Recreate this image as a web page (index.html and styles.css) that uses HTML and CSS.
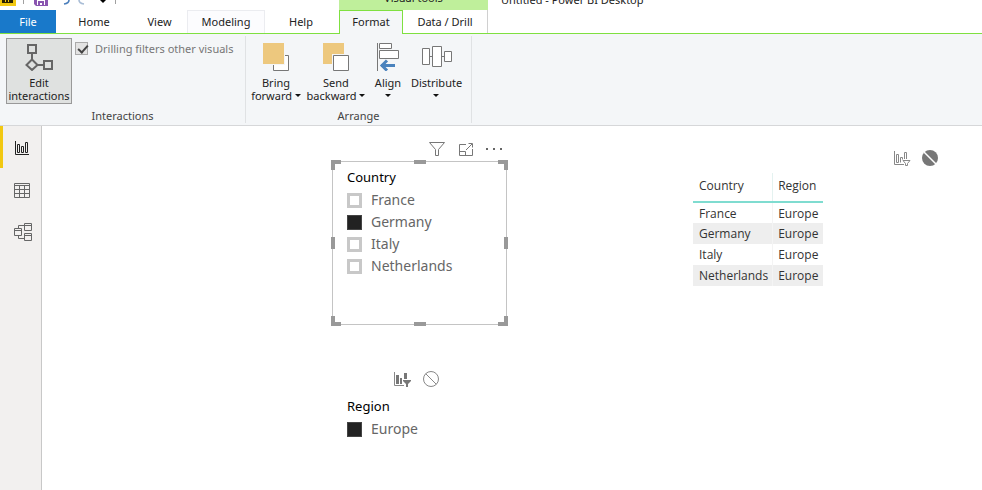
FILE: index.html
```html
<!DOCTYPE html>
<html lang="en">
<head>
<meta charset="utf-8">
<title>Untitled - Power BI Desktop</title>
<link rel="stylesheet" href="styles.css">
</head>
<body>
<header class="titlebar">
  <div class="quick">
    <svg width="120" height="10" viewBox="0 0 120 10" aria-hidden="true">
      <path fill="#f2c811" d="M0 0h16v6H0z"/>
      <path fill="#2b2200" d="M2 0h11v3H2z"/>
      <path stroke="#f2c811" d="M5.500 0v2M8.500 0v2"/>
      <path stroke="#a0a0a0" d="M23.500 0v4M115.500 0v4"/>
      <path fill="#8a55b0" d="M34 0h14v6H36l-2-2z"/>
      <path fill="#fff" d="M37 0h8v5h-8z"/>
      <path fill="#8a55b0" d="M38 1h6v4h-2V3h-2v2h-2z"/>
      <path fill="none" stroke="#4a7ebb" stroke-width="1.600" d="M69 0c0 2-1.500 3.500-5 4"/>
      <path fill="none" stroke="#a9bdd6" stroke-width="1.600" d="M79 0c0 2 1.500 3.500 5 4"/>
      <path d="M100 0h6l-3 3z"/>
    </svg>
  </div>
  <div class="context">Visual tools</div>
  <div class="doc">Untitled - Power BI Desktop</div>
</header>
<nav class="tabs">
  <button class="tab file">File</button>
  <button class="tab">Home</button>
  <button class="tab">View</button>
  <button class="tab hover">Modeling</button>
  <button class="tab">Help</button>
  <button class="tab active">Format</button>
  <button class="tab last">Data / Drill</button>
</nav>
<section class="ribbon">
  <div class="group interactions">
    <div class="tools">
      <button class="tool pressed">
        <svg width="30" height="28" viewBox="-1 -1 30 28" fill="none" stroke="#666" stroke-width="2" aria-hidden="true">
          <path d="M3 1h8v8H3zM7 9v6M7 15.500l5.500 5.500L7 26 1.500 21zM12 21h6M19 17h8v8h-8z"/>
        </svg>
        <span>Edit<br>interactions</span>
      </button>
      <label class="check"><input type="checkbox" checked>Drilling filters other visuals</label>
    </div>
    <div class="caption">Interactions</div>
  </div>
  <div class="group arrange">
    <div class="tools">
      <button class="tool">
        <svg width="26" height="28" viewBox="0 0 26 28" aria-hidden="true"><path fill="#fff" stroke="#777" d="M10.500 12.500h15v15h-15z"/><path fill="#f4f6f8" d="M0 0h22v22H0z"/><path fill="#edc87e" d="M0 0h21v21H0z"/></svg>
        <span>Bring<br>forward <i class="caret"></i></span>
      </button>
      <button class="tool">
        <svg width="26" height="28" viewBox="0 0 26 28" aria-hidden="true"><path fill="#edc87e" d="M0 0h21v21H0z"/><path fill="#f4f6f8" d="M9 11h17v17H9z"/><path fill="#fff" stroke="#777" d="M10.500 12.500h15v15h-15z"/></svg>
        <span>Send<br>backward <i class="caret"></i></span>
      </button>
      <button class="tool">
        <svg width="22" height="28" viewBox="0 0 22 28" aria-hidden="true"><path fill="#fff" stroke="#777" d="M.5 0v28M2.500.5h12v5h-12zM2.500 7.500h19v8h-19z"/><path fill="none" stroke="#4a82bd" stroke-width="3" d="M18 22.500H4M10 17.500l-5 5 5 5"/></svg>
        <span>Align<br><i class="caret"></i></span>
      </button>
      <button class="tool">
        <svg width="30" height="28" viewBox="0 0 30 28" aria-hidden="true"><path fill="#fff" stroke="#777" d="M.5 5.500h7v16h-7zM10.500 3.500h9v20h-9zM22.500 8.500h7v10h-7zM8 13.500h2M20 13.500h2"/></svg>
        <span>Distribute<br><i class="caret"></i></span>
      </button>
    </div>
    <div class="caption">Arrange</div>
  </div>
</section>
<main class="work">
  <nav class="views">
    <button class="view current" aria-label="Report"><svg width="20" height="20" viewBox="0 0 20 20" fill="none" stroke="#222" aria-hidden="true"><path d="M3.500 3v13.500H17M5.500 6.500h2v8h-2zM9.500 8.500h2v6h-2zM13.500 4.500h2v10h-2z"/></svg></button>
    <button class="view" aria-label="Data"><svg width="20" height="20" viewBox="0 0 20 20" fill="none" stroke="#666" aria-hidden="true"><path d="M2.500 3.500h15v14h-15zM2 5.500h16M2 9.500h16M2 13.500h16M7.500 6v12M12.500 6v12"/></svg></button>
    <button class="view" aria-label="Model"><svg width="20" height="20" viewBox="0 0 20 20" fill="none" stroke="#666" aria-hidden="true"><path d="M2.500 6.500h7v7h-7zM2 8.500h8M12.500 1.500h7v7h-7zM12 3.500h8M12.500 11.500h7v7h-7zM12 13.500h8M6.500 6V3.500H12M6.500 14v2.500H12"/></svg></button>
  </nav>
  <div class="canvas">
    <div class="column">
      <div class="actions top">
        <svg width="18" height="16" viewBox="0 0 18 16" fill="none" stroke="#777" aria-hidden="true"><path d="M1.500 1.500h15l-6 7v6h-3v-6z"/></svg>
        <svg width="16" height="16" viewBox="0 0 16 16" fill="none" stroke="#777" aria-hidden="true"><path d="M8 3.500H1.500v11h13V8M1.500 10.500h6v4M8 9l6-6M10.500 2.500h4v4"/></svg>
        <svg width="16" height="16" viewBox="0 0 16 16" fill="#666" aria-hidden="true"><path d="M0 7h2v2H0zM7 7h2v2H7zM14 7h2v2h-2z"/></svg>
      </div>
      <section class="slicer selected">
        <i class="handle nw"></i><i class="handle n"></i><i class="handle ne"></i><i class="handle w"></i><i class="handle e"></i><i class="handle sw"></i><i class="handle s"></i><i class="handle se"></i>
        <h2>Country</h2>
        <label><input type="checkbox">France</label>
        <label><input type="checkbox" checked>Germany</label>
        <label><input type="checkbox">Italy</label>
        <label><input type="checkbox">Netherlands</label>
      </section>
      <div class="actions mid">
        <svg width="18" height="18" viewBox="0 0 18 18" aria-hidden="true"><path fill="none" stroke="#888" d="M1.500 2v13.500H11"/><path fill="#777" d="M3 5h3v9H3zM7 8h2v6H7zM11 3h3v6h-3zM10 10h8v1l-3 3v3h-2v-3l-3-3z"/></svg>
        <svg width="18" height="18" viewBox="0 0 18 18" fill="none" stroke="#888" aria-hidden="true"><circle cx="9" cy="9" r="7.500"/><path d="M3.700 3.700l10.600 10.600"/></svg>
      </div>
      <section class="slicer">
        <h2>Region</h2>
        <label><input type="checkbox" checked>Europe</label>
      </section>
    </div>
    <div class="tablevis">
      <div class="actions side">
        <svg width="18" height="18" viewBox="0 0 18 18" fill="none" stroke="#888" aria-hidden="true"><path d="M1.500 2v13.500H11M3.500 5.500h2v8h-2zM7.500 13.500v-5h2v2M11.500 10V3.500h2V10M10 11.500h7l-2.500 3v2h-2v-2z"/></svg>
        <svg width="18" height="18" viewBox="0 0 18 18" aria-hidden="true"><circle cx="9" cy="9" r="8" fill="#777"/><path stroke="#fff" stroke-width="1.500" d="M3 3l12 12"/></svg>
      </div>
      <table>
        <thead><tr><th>Country</th><th>Region</th></tr></thead>
        <tbody>
          <tr><td>France</td><td>Europe</td></tr>
          <tr><td>Germany</td><td>Europe</td></tr>
          <tr><td>Italy</td><td>Europe</td></tr>
          <tr><td>Netherlands</td><td>Europe</td></tr>
        </tbody>
      </table>
    </div>
  </div>
</main>
</body>
</html>
```
FILE: styles.css
```css
* { box-sizing: border-box; }
body {
  margin: 0;
  min-height: 100vh;
  display: flex;
  flex-direction: column;
  background: #fff;
  color: #222;
  font: 11px/13px "Noto Sans", "Open Sans", sans-serif;
}
button { margin: 0; padding: 0; border: 0; background: none; color: inherit; font: inherit; }
svg { display: block; flex: none; }
input { appearance: none; margin: 0; flex: none; }

.titlebar { display: flex; align-items: flex-end; height: 10px; overflow: hidden; }
.quick { width: 339px; }
.context { width: 149px; padding-bottom: 6px; background: #bfef9b; text-align: center; }
.doc { padding: 0 0 4px 13px; }

.tabs { display: flex; height: 24px; border-bottom: 1px solid #7fe040; }
.tab { width: 76px; height: 23px; }
.tab.file { width: 56px; background: #1979ca; color: #fff; }
.tab:nth-child(3) { width: 55px; }
.tab.hover { width: 78px; border: 1px solid #ebecf0; border-width: 1px 1px 0; padding-bottom: 1px; background: #fcfcfe; }
.tab:nth-child(5) { width: 72px; }
.tab.active { width: 64px; height: 24px; margin-left: 2px; border: 1px solid #7fe040; border-bottom: 0; padding-bottom: 2px; background: #f4f6f8; }
.tab.last { width: 85px; border-right: 1px solid #d0d0d0; }

.ribbon { display: flex; padding: 2px 0; border-bottom: 1px solid #d6d7d9; background: #f4f6f8; }
.group { display: flex; flex-direction: column; height: 87px; border-right: 1px solid #e0e2e4; }
.interactions { width: 246px; padding-left: 6px; }
.arrange { width: 226px; }
.tools { display: flex; flex: 1; padding-top: 2px; }
.caption { line-height: 14px; text-align: center; color: #444; }
.interactions .caption { margin-right: 6px; }
.tool { display: flex; flex-direction: column; align-items: center; gap: 5px; height: 66px; padding-top: 5px; white-space: nowrap; }
.arrange .tool { width: 60px; }
.arrange .tool:nth-child(3) { width: 44px; }
.arrange .tool:nth-child(4) { width: 53px; }
.tool.pressed { width: 66px; padding-top: 4px; border: 1px solid #999; background: #dfe1e0; }
.caret { display: inline-block; border: 3px solid transparent; border-top-color: #111; border-bottom: 0; vertical-align: 3px; }
.check { display: flex; gap: 7px; height: 20px; padding-left: 3px; align-items: center; color: #777; white-space: nowrap; }
.check input { position: relative; width: 13px; height: 13px; border: 1px solid #aaa; background: #e3e3e3; }
.check input::after { content: ""; position: absolute; left: 4px; top: 0; width: 4px; height: 8px; border: solid #444; border-width: 0 2px 2px 0; transform: rotate(42deg); }

.work { display: flex; flex: 1; }
.views { display: flex; flex-direction: column; width: 42px; border-right: 1px solid #c8c8c8; background: #f2f0ef; }
.view { display: flex; align-items: center; justify-content: center; height: 42px; padding: 2px 0 0 2px; }
.view.current { padding-left: 0; border-left: 3px solid #f2c811; }

.canvas { display: flex; flex: 1; gap: 186px; padding-left: 290px; }
.column { width: 175px; }
.actions { display: flex; justify-content: flex-end; }
.top { gap: 12px; padding: 15px 5px 4px 0; }
.mid { gap: 11px; padding: 45px 67px 2px 0; }
.side { gap: 10px; padding: 23px 0 6px; }
.slicer { position: relative; padding: 7px 0 0 14px; border: 1px solid transparent; }
.slicer.selected { height: 164px; border-color: #c4c4c4; }
.slicer h2 { margin: 0 0 4px; font-size: 13px; line-height: 16px; font-weight: 400; color: #000; }
.slicer label { display: flex; align-items: center; gap: 9px; height: 22px; font-size: 14px; line-height: 20px; color: #666; }
.slicer input { width: 15px; height: 15px; border: 3px solid #c8c8c8; background: #fff; }
.slicer input:checked { border: 1px solid #444; background: #222; }

.handle { position: absolute; width: 12px; height: 4px; background: #999; }
.n, .s { left: calc(50% - 6px); }
.n { top: -2px; }
.s { bottom: -2px; }
.w, .e { top: calc(50% - 6px); width: 4px; height: 12px; }
.w { left: -2px; }
.e { right: -2px; }
.nw, .ne, .sw, .se { width: 10px; height: 10px; border: 0 solid #999; background: none; }
.nw { left: -2px; top: -2px; border-width: 4px 0 0 4px; }
.ne { right: -2px; top: -2px; border-width: 4px 4px 0 0; }
.sw { left: -2px; bottom: -2px; border-width: 0 0 4px 4px; }
.se { right: -2px; bottom: -2px; border-width: 0 4px 4px 0; }

.tablevis { width: 246px; }
table { border-collapse: collapse; font-family: "Open Sans", "Noto Sans", sans-serif; font-size: 12px; line-height: 16px; color: #333; }
th, td { padding: 1px 5px 0; text-align: left; font-weight: 400; }
th:first-child, td:first-child { padding: 1px 4px 0 6px; }
th, th:first-child { height: 29px; padding-bottom: 4px; border-bottom: 2px solid #7fdcd0; }
th:first-child { border-right: 1px solid #e4f2f0; }
td { height: 21px; }
tbody tr:nth-child(even) { background: #eee; }
td:first-child { border-right: 1px solid #f4f4f4; }
```
